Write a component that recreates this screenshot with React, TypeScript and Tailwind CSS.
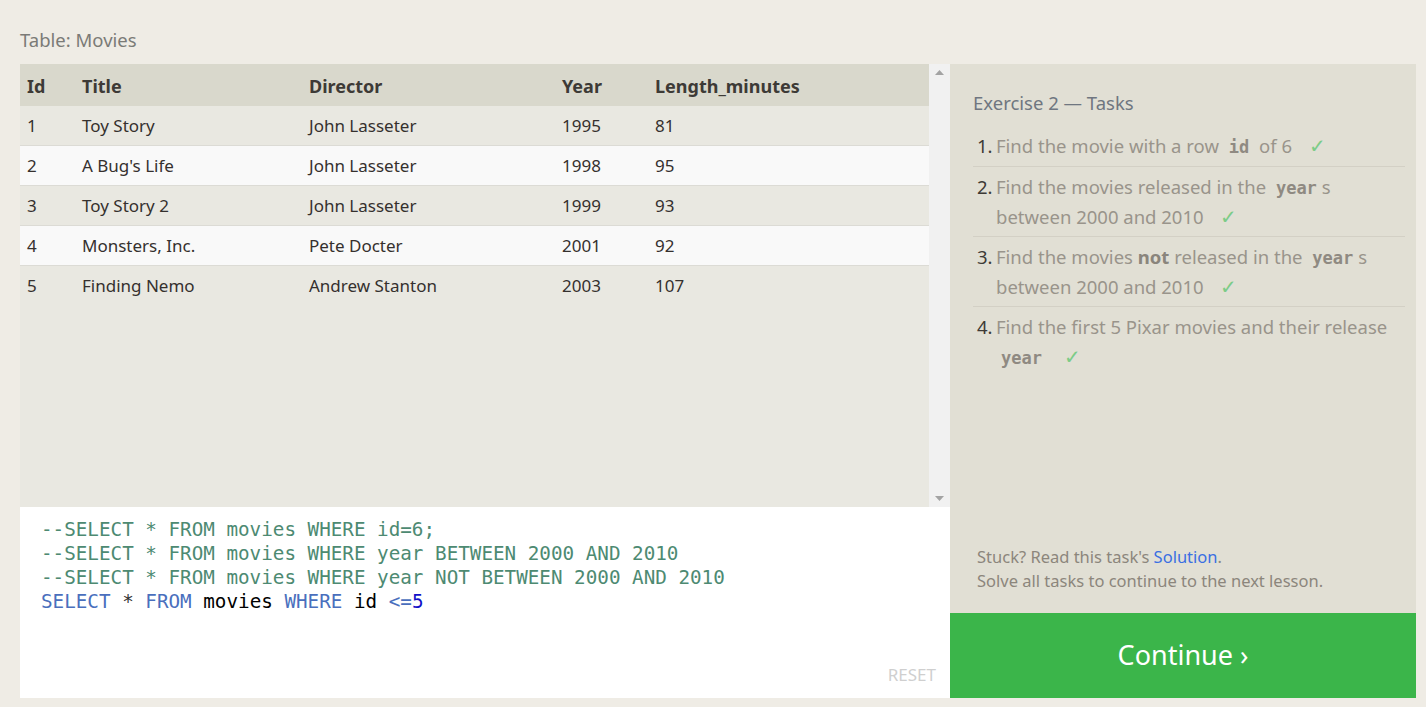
import React from 'react'

const ROWS = [
  { id: 1, title: 'Toy Story', director: 'John Lasseter', year: 1995, len: 81 },
  { id: 2, title: "A Bug's Life", director: 'John Lasseter', year: 1998, len: 95 },
  { id: 3, title: 'Toy Story 2', director: 'John Lasseter', year: 1999, len: 93 },
  { id: 4, title: 'Monsters, Inc.', director: 'Pete Docter', year: 2001, len: 92 },
  { id: 5, title: 'Finding Nemo', director: 'Andrew Stanton', year: 2003, len: 107 },
]

const sans = "font-['Noto_Sans','Open_Sans',sans-serif]"

function Code({ children }: { children: React.ReactNode }) {
  return (
    <code className="px-[5px] font-['DejaVu_Sans_Mono',monospace] text-[17px] leading-none font-bold text-[#8f8a82]">
      {children}
    </code>
  )
}

function Check() {
  return <span className="ml-3 text-[20px] leading-none text-[#7ccc87]">✓</span>
}

export default function App() {
  return (
    <div className={`min-h-screen bg-[#efece5] pl-5 pr-[10px] pt-[27px] ${sans}`}>
      <div className="mb-[12px] text-[18.5px] leading-[25px] text-[#7b7b77]">Table: Movies</div>

      <div className="flex">
        {/* Left: table + editor */}
        <div className="flex w-[930px] flex-col">
          <div className="flex h-[443px] bg-[#e9e8e1]">
            <div className="flex-1">
              <div className="flex h-[42px] items-center bg-[#d9d8cc] pt-[3px] text-[18px] font-bold text-[#3d3a36]">
                <div className="w-[62px] pl-[7px]">Id</div>
                <div className="w-[227px]">Title</div>
                <div className="w-[253px]">Director</div>
                <div className="w-[93px]">Year</div>
                <div>Length_minutes</div>
              </div>
              {ROWS.map((r, i) => (
                <div
                  key={r.id}
                  className={`flex h-[40px] items-center border-b border-[#dcdbd5] text-[17px] text-[#35302e] ${
                    i % 2 === 1 ? 'bg-[#f9f9f9]' : 'bg-[#e9e8e1]'
                  } ${i === ROWS.length - 1 ? 'border-b-0' : ''}`}
                >
                  <div className="w-[62px] pl-[7px]">{r.id}</div>
                  <div className="w-[227px]">{r.title}</div>
                  <div className="w-[253px]">{r.director}</div>
                  <div className="w-[93px]">{r.year}</div>
                  <div>{r.len}</div>
                </div>
              ))}
            </div>
            {/* Scrollbar */}
            <div className="flex w-[21px] flex-col items-center justify-between bg-[#f1f1f1] py-[6px]">
              <svg width="9" height="5" viewBox="0 0 9 5">
                <path d="M0 5 L4.5 0 L9 5 Z" fill="#a3a3a3" />
              </svg>
              <svg width="9" height="5" viewBox="0 0 9 5">
                <path d="M0 0 L4.5 5 L9 0 Z" fill="#a3a3a3" />
              </svg>
            </div>
          </div>

          <div className="relative h-[191px] bg-white pl-[21px] pt-[11px] font-['DejaVu_Sans_Mono',monospace] text-[19.25px] leading-[24px]">
            <div className="text-[#4d8a72]">--SELECT * FROM movies WHERE id=6;</div>
            <div className="text-[#4d8a72]">--SELECT * FROM movies WHERE year BETWEEN 2000 AND 2010</div>
            <div className="text-[#4d8a72]">--SELECT * FROM movies WHERE year NOT BETWEEN 2000 AND 2010</div>
            <div className="whitespace-pre">
              <span className="text-[#4a6fbd]">SELECT</span>
              <span className="text-[#333]"> * </span>
              <span className="text-[#4a6fbd]">FROM</span>
              <span className="text-black"> movies </span>
              <span className="text-[#4a6fbd]">WHERE</span>
              <span className="text-black"> id </span>
              <span className="text-[#4a6fbd]">&lt;=</span>
              <span className="text-[#1010c8]">5</span>
            </div>
            <div className={`absolute bottom-[11px] right-[14px] text-[17px] text-[#cfcfcf] ${sans}`}>RESET</div>
          </div>
        </div>

        {/* Right: tasks */}
        <div className="flex w-[466px] flex-col">
          <div className="flex flex-1 flex-col bg-[#e1dfd4] pl-[23px] pr-[11px] pt-[26px]">
            <div className="text-[18.5px] leading-[26px] text-[#6f7680]">Exercise 2 — Tasks</div>
            <ol className="mt-[15px] text-[18.5px] leading-[30px] text-[#99948b]">
              <li className="flex border-b border-[#d3d0c5] pb-[5px]">
                <span className="w-[23px] shrink-0 pl-[4px] text-[#3d3a36]">1.</span>
                <span className="pr-[4px]">
                  Find the movie with a row <Code>id</Code> of 6 <Check />
                </span>
              </li>
              <li className="flex border-b border-[#d3d0c5] pb-[4px] pt-[5px]">
                <span className="w-[23px] shrink-0 pl-[4px] text-[#3d3a36]">2.</span>
                <span className="pr-[4px]">
                  Find the movies released in the <Code>year</Code>s between 2000 and 2010 <Check />
                </span>
              </li>
              <li className="flex border-b border-[#d3d0c5] pb-[4px] pt-[5px]">
                <span className="w-[23px] shrink-0 pl-[4px] text-[#3d3a36]">3.</span>
                <span className="pr-[4px]">
                  Find the movies <b className="text-[#8a857c]">not</b> released in the <Code>year</Code>s between 2000 and 2010{' '}
                  <Check />
                </span>
              </li>
              <li className="flex pb-[4px] pt-[5px]">
                <span className="w-[23px] shrink-0 pl-[4px] text-[#3d3a36]">4.</span>
                <span className="pr-[4px]">
                  Find the first 5 Pixar movies and their release <Code>year</Code> <Check />
                </span>
              </li>
            </ol>
            <div className="mt-auto pb-[20px] pl-[4px] text-[16.5px] leading-[24px] text-[#8c867c]">
              <div>
                Stuck? Read this task's <span className="text-[#3a6fe2]">Solution</span>.
              </div>
              <div>Solve all tasks to continue to the next lesson.</div>
            </div>
          </div>
          <div className="flex h-[85px] items-center justify-center bg-[#3bb54a] text-[27px] text-white">
            Continue ›
          </div>
        </div>
      </div>
    </div>
  )
}
